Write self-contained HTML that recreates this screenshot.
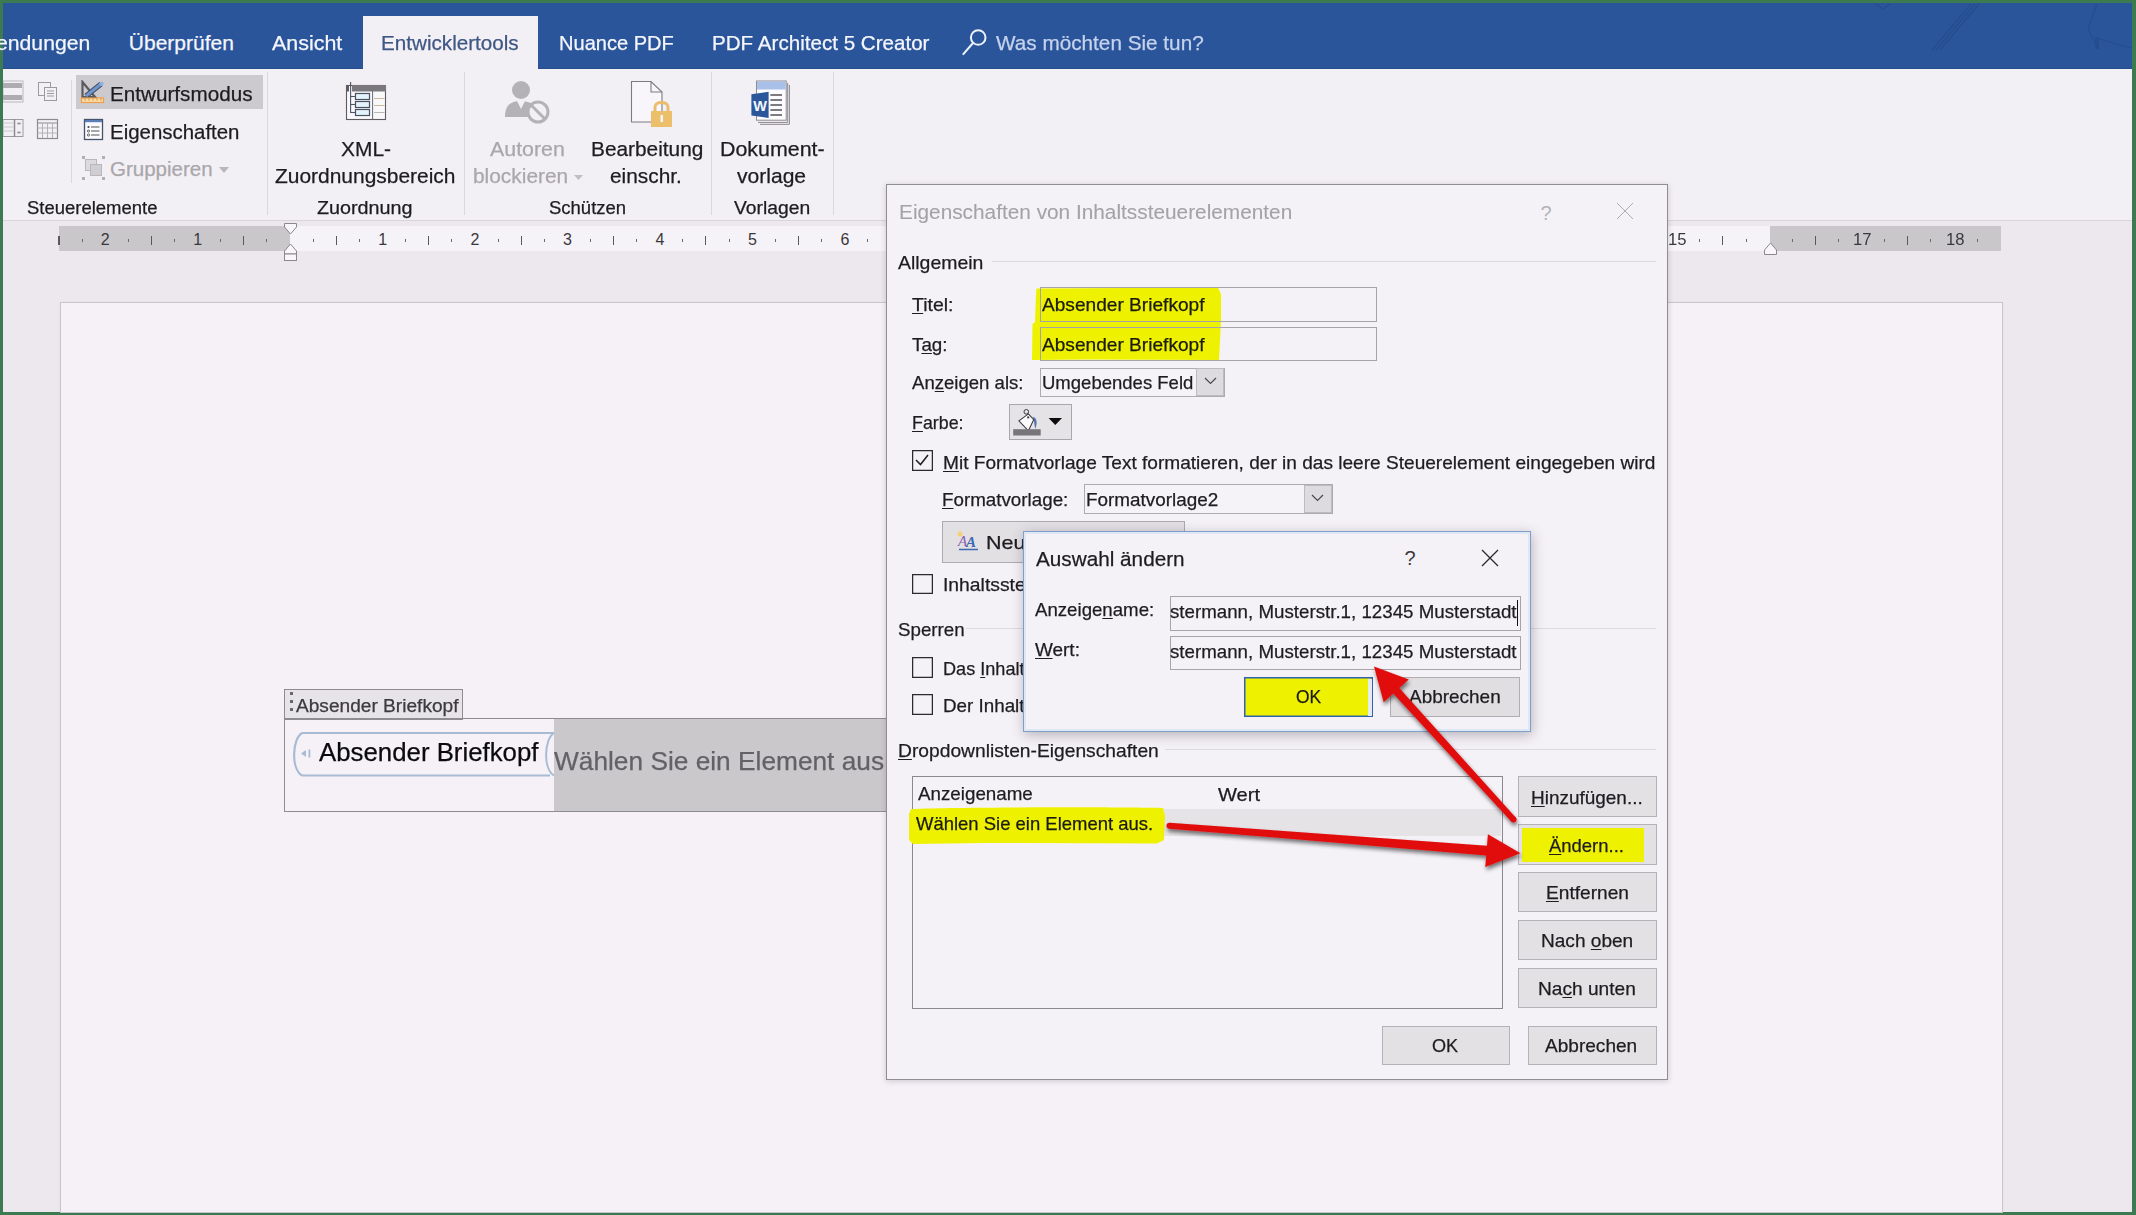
<!DOCTYPE html>
<html><head><meta charset="utf-8"><style>
html,body{margin:0;padding:0;}
body{width:2136px;height:1215px;position:relative;overflow:hidden;background:#3c7a52;font-family:"Liberation Sans",sans-serif;}
.a{position:absolute;}
.t{white-space:pre;-webkit-text-stroke:0.25px currentColor;}
u{text-decoration:underline;text-underline-offset:2px;text-decoration-thickness:1px;}
</style></head><body>
<div class="a" style="left:3.0px;top:3.0px;width:2129.0px;height:1209.0px;background:#ece8ee;"></div>
<div class="a" style="left:3.0px;top:3.0px;width:2129.0px;height:65.5px;background:#2b559b;"></div>
<div class="a" style="left:3.0px;top:67.5px;width:2129.0px;height:1.0px;background:#264d8c;"></div>
<div class="a" style="left:3.0px;top:68.5px;width:2129.0px;height:151.5px;background:#f3f0f5;"></div>
<div class="a" style="left:3.0px;top:220.0px;width:2129.0px;height:1.0px;background:#d8d5da;"></div>
<div class="a" style="left:363.0px;top:16.0px;width:175.0px;height:53.0px;background:#f3f0f5;"></div>
<span id="t0" class="a t" style="left:-4.5px;top:32.32px;font-size:21px;line-height:21px;color:#f4f6fb;font-family:'Liberation Sans',sans-serif;transform:scaleX(1.0092);transform-origin:0 0;">endungen</span>
<span id="t1" class="a t" style="left:128.8px;top:32.32px;font-size:21px;line-height:21px;color:#f4f6fb;font-family:'Liberation Sans',sans-serif;">Überprüfen</span>
<span id="t2" class="a t" style="left:272.4px;top:32.32px;font-size:21px;line-height:21px;color:#f4f6fb;font-family:'Liberation Sans',sans-serif;transform:scaleX(1.0207);transform-origin:0 0;">Ansicht</span>
<span id="t3" class="a t" style="left:381.0px;top:32.32px;font-size:21px;line-height:21px;color:#3e5783;font-family:'Liberation Sans',sans-serif;transform:scaleX(0.9831);transform-origin:0 0;">Entwicklertools</span>
<span id="t4" class="a t" style="left:558.5px;top:32.32px;font-size:21px;line-height:21px;color:#f4f6fb;font-family:'Liberation Sans',sans-serif;transform:scaleX(0.9549);transform-origin:0 0;">Nuance PDF</span>
<span id="t5" class="a t" style="left:711.7px;top:32.32px;font-size:21px;line-height:21px;color:#f4f6fb;font-family:'Liberation Sans',sans-serif;transform:scaleX(0.9808);transform-origin:0 0;">PDF Architect 5 Creator</span>
<svg class="a" style="left:958px;top:26px" width="34" height="32" viewBox="0 0 34 32"><circle cx="20.2" cy="11.5" r="7.3" fill="none" stroke="#eef3fb" stroke-width="2"/><line x1="15" y1="17" x2="5.3" y2="28.1" stroke="#eef3fb" stroke-width="2" stroke-linecap="round"/></svg>
<span id="t6" class="a t" style="left:995.5px;top:32.32px;font-size:21px;line-height:21px;color:#c6d3ec;font-family:'Liberation Sans',sans-serif;transform:scaleX(0.9867);transform-origin:0 0;">Was möchten Sie tun?</span>
<svg class="a" style="left:1850px;top:3px" width="281" height="66" viewBox="0 0 281 66">
<g stroke="#254c8c" stroke-width="1.2" fill="none" opacity="0.9">
<path d="M121 1 L82 47 M125 1 L86 47 M129 1 L90 47"/>
<path d="M26 1 L33 6 L40 1"/>
<path d="M247 1 L238 26 L248 45"/><path d="M246 35 L281 45"/>
</g><rect x="245" y="34" width="4" height="12" fill="#254c8c" opacity="0.8"/></svg>
<div class="a" style="left:71.0px;top:80.0px;width:1.0px;height:103.0px;background:#dcd9de;"></div>
<div class="a" style="left:267.0px;top:72.0px;width:1.0px;height:143.0px;background:#dcd9de;"></div>
<div class="a" style="left:464.0px;top:72.0px;width:1.0px;height:143.0px;background:#dcd9de;"></div>
<div class="a" style="left:711.0px;top:72.0px;width:1.0px;height:143.0px;background:#dcd9de;"></div>
<div class="a" style="left:833.0px;top:72.0px;width:1.0px;height:143.0px;background:#dcd9de;"></div>
<svg class="a" style="left:3px;top:80px" width="22" height="24" viewBox="0 0 22 24">
<rect x="0" y="1" width="20" height="21" fill="none" stroke="#b9b7bb" stroke-width="1"/>
<rect x="0" y="3" width="19" height="5" fill="#aeacb0"/><rect x="0" y="15" width="19" height="5" fill="#aeacb0"/>
</svg>
<svg class="a" style="left:37px;top:80px" width="23" height="23" viewBox="0 0 23 23">
<rect x="1.5" y="2.5" width="12" height="13" fill="none" stroke="#9c9a9e"/><rect x="7.5" y="7.5" width="12" height="13" fill="#f3f0f5" stroke="#9c9a9e"/>
<line x1="10" y1="11" x2="17" y2="11" stroke="#9c9a9e"/><line x1="10" y1="13.5" x2="17" y2="13.5" stroke="#9c9a9e"/><line x1="10" y1="16" x2="17" y2="16" stroke="#9c9a9e"/>
</svg>
<svg class="a" style="left:3px;top:119px" width="22" height="21" viewBox="0 0 22 21">
<rect x="0" y="0.5" width="20" height="17" fill="none" stroke="#9c9a9e"/><line x1="11.5" y1="0" x2="11.5" y2="18" stroke="#8c8a8e" stroke-width="1.5"/>
<ellipse cx="16" cy="4.5" rx="2" ry="1" fill="#9c9a9e"/><ellipse cx="16" cy="13.5" rx="2" ry="1" fill="#9c9a9e"/>
<line x1="0" y1="4" x2="10" y2="4" stroke="#c9c7cb"/><line x1="0" y1="8" x2="10" y2="8" stroke="#c9c7cb"/><line x1="0" y1="12" x2="10" y2="12" stroke="#c9c7cb"/>
</svg>
<svg class="a" style="left:36px;top:118px" width="24" height="23" viewBox="0 0 24 23">
<rect x="1.5" y="1.5" width="20" height="19" fill="none" stroke="#8c8a8e" stroke-width="1.2"/><line x1="1.5" y1="5" x2="21.5" y2="5" stroke="#8c8a8e"/>
<line x1="6.5" y1="5" x2="6.5" y2="20" stroke="#b3b1b5"/><line x1="11.5" y1="5" x2="11.5" y2="20" stroke="#b3b1b5"/><line x1="16.5" y1="5" x2="16.5" y2="20" stroke="#b3b1b5"/>
<line x1="1.5" y1="10" x2="21.5" y2="10" stroke="#b3b1b5"/><line x1="1.5" y1="15" x2="21.5" y2="15" stroke="#b3b1b5"/>
</svg>
<div class="a" style="left:76.0px;top:75.0px;width:187.0px;height:34.0px;background:#cdcacf;"></div>
<svg class="a" style="left:80px;top:80px" width="26" height="24" viewBox="0 0 26 24">
<path d="M2.5 2 L2.5 17 L15 17 Z" fill="none" stroke="#5b5a5e" stroke-width="2.2"/>
<path d="M6 16 L21 4" stroke="#3f4a5c" stroke-width="5.2" stroke-linecap="butt"/>
<path d="M6 16 L21 4" stroke="#6f95cc" stroke-width="3.2"/>
<path d="M20 5 L23 2.5" stroke="#8fb0dc" stroke-width="3.5"/>
<rect x="1.5" y="18" width="22" height="4.5" fill="#f9dba8" stroke="#eba04a" stroke-width="1.2"/>
<path d="M5 18.5 V20.5 M9 18.5 V20.5 M13 18.5 V20.5 M17 18.5 V20.5 M21 18.5 V20.5" stroke="#d98a2e" stroke-width="1"/>
</svg>
<span id="t7" class="a t" style="left:110.0px;top:83.55px;font-size:20.5px;line-height:20.5px;color:#1d1c1f;font-family:'Liberation Sans',sans-serif;transform:scaleX(1.0086);transform-origin:0 0;">Entwurfsmodus</span>
<svg class="a" style="left:83px;top:118px" width="22" height="24" viewBox="0 0 22 24">
<rect x="1.5" y="1.5" width="18" height="20" fill="#fbfafd" stroke="#46526a" stroke-width="1.3"/>
<rect x="2" y="2" width="17" height="2.2" fill="#5b7fb8"/>
<circle cx="5.5" cy="9" r="1.1" fill="#444"/><line x1="8" y1="9" x2="16.5" y2="9" stroke="#555" stroke-width="1"/>
<circle cx="5.5" cy="13" r="1.1" fill="none" stroke="#555" stroke-width="0.9"/><line x1="8" y1="13" x2="16.5" y2="13" stroke="#555" stroke-width="1"/>
<circle cx="5.5" cy="17" r="1.1" fill="none" stroke="#555" stroke-width="0.9"/><line x1="8" y1="17" x2="16.5" y2="17" stroke="#555" stroke-width="1"/>
</svg>
<span id="t8" class="a t" style="left:110.0px;top:121.65px;font-size:20.5px;line-height:20.5px;color:#1d1c1f;font-family:'Liberation Sans',sans-serif;transform:scaleX(0.9966);transform-origin:0 0;">Eigenschaften</span>
<svg class="a" style="left:81px;top:155px" width="26" height="26" viewBox="0 0 26 26">
<rect x="1" y="1" width="3" height="3" fill="#b1afb3"/><rect x="21" y="1" width="3" height="3" fill="#b1afb3"/>
<rect x="1" y="22" width="3" height="3" fill="#b1afb3"/><rect x="21" y="22" width="3" height="3" fill="#b1afb3"/>
<rect x="4.5" y="4.5" width="11" height="11" fill="#dcdadd" stroke="#b9b7bb"/><rect x="9.5" y="9.5" width="11" height="11" fill="#d0ced2" stroke="#b9b7bb"/>
</svg>
<span id="t9" class="a t" style="left:110.0px;top:159.25px;font-size:20.5px;line-height:20.5px;color:#a9a7ab;font-family:'Liberation Sans',sans-serif;">Gruppieren</span>
<svg class="a" style="left:219px;top:167px" width="11" height="7"><path d="M0 0 L10 0 L5 6 Z" fill="#b9b7bb"/></svg>
<span id="t10" class="a t" style="left:27.0px;top:198.76px;font-size:18px;line-height:18px;color:#1d1c1f;font-family:'Liberation Sans',sans-serif;transform:scaleX(1.0268);transform-origin:0 0;">Steuerelemente</span>
<svg class="a" style="left:345px;top:81px" width="42" height="40" viewBox="0 0 42 40">
<rect x="1.5" y="4.5" width="39" height="34" fill="#f9f8fb" stroke="#5d5b60" stroke-width="1.1"/>
<rect x="7" y="4" width="34" height="6.5" fill="#7a787d"/>
<rect x="1" y="4" width="3" height="6.5" fill="#5d5b60"/>
<line x1="5.6" y1="1" x2="5.6" y2="32" stroke="#4f5566" stroke-width="1.1"/>
<rect x="10.5" y="12.5" width="14" height="6" fill="#e4f2fb" stroke="#4a5262" stroke-width="1.2"/>
<rect x="10.5" y="20.5" width="14" height="6" fill="#e4f2fb" stroke="#4a5262" stroke-width="1.2"/>
<rect x="10.5" y="28.5" width="14" height="6" fill="#e4f2fb" stroke="#4a5262" stroke-width="1.2"/>
<line x1="5.6" y1="15.5" x2="10.5" y2="15.5" stroke="#4f5566" stroke-width="1.1"/><line x1="5.6" y1="23.5" x2="10.5" y2="23.5" stroke="#4f5566" stroke-width="1.1"/><line x1="5.6" y1="31.5" x2="10.5" y2="31.5" stroke="#4f5566" stroke-width="1.1"/>
<line x1="27.6" y1="10" x2="27.6" y2="38.5" stroke="#6a686d" stroke-width="1"/>
<line x1="29" y1="17.5" x2="39.5" y2="17.5" stroke="#c9b89a" stroke-width="1"/><line x1="29" y1="24.5" x2="39.5" y2="24.5" stroke="#c9b89a" stroke-width="1"/><line x1="29" y1="31.5" x2="39.5" y2="31.5" stroke="#b9b7bb" stroke-width="1"/>
</svg>
<span id="t11" class="a t" style="left:340.5px;top:138.75px;font-size:20.5px;line-height:20.5px;color:#1d1c1f;font-family:'Liberation Sans',sans-serif;transform:scaleX(1.0207);transform-origin:0 0;">XML-</span>
<span id="t12" class="a t" style="left:275.0px;top:166.45px;font-size:20.5px;line-height:20.5px;color:#1d1c1f;font-family:'Liberation Sans',sans-serif;transform:scaleX(1.0218);transform-origin:0 0;">Zuordnungsbereich</span>
<span id="t13" class="a t" style="left:317.3px;top:199.36px;font-size:18px;line-height:18px;color:#1d1c1f;font-family:'Liberation Sans',sans-serif;transform:scaleX(1.0967);transform-origin:0 0;">Zuordnung</span>
<svg class="a" style="left:504px;top:79px" width="48" height="48" viewBox="0 0 48 48">
<circle cx="17" cy="11" r="9" fill="#b4b2b6"/>
<path d="M1 38 C1 25 8 22 17 22 C26 22 31 26 32 32 L30 38 Z" fill="#b4b2b6"/>
<path d="M13 22 L17 30 L21 22" fill="#f3f0f5"/>
<circle cx="34" cy="33" r="10" fill="#f3f0f5" stroke="#b4b2b6" stroke-width="3"/>
<line x1="27" y1="26" x2="41" y2="40" stroke="#b4b2b6" stroke-width="3"/>
</svg>
<span id="t14" class="a t" style="left:489.6px;top:139.05px;font-size:20.5px;line-height:20.5px;color:#a9a7ab;font-family:'Liberation Sans',sans-serif;transform:scaleX(1.0430);transform-origin:0 0;">Autoren</span>
<span id="t15" class="a t" style="left:472.9px;top:166.25px;font-size:20.5px;line-height:20.5px;color:#a9a7ab;font-family:'Liberation Sans',sans-serif;transform:scaleX(1.0187);transform-origin:0 0;">blockieren</span>
<svg class="a" style="left:574px;top:175px" width="10" height="6"><path d="M0 0 L9 0 L4.5 5 Z" fill="#c0bec2"/></svg>
<svg class="a" style="left:630px;top:80px" width="44" height="48" viewBox="0 0 44 48">
<path d="M1.5 1.5 L21 1.5 L32 12 L32 42 L1.5 42 Z" fill="#f8f6fa" stroke="#7d7b80" stroke-width="1.1"/>
<path d="M21 1.5 L21 12 L32 12" fill="none" stroke="#7d7b80" stroke-width="1.1"/>
<path d="M25 32 L25 27 C25 21 38 21 38 27 L38 32" fill="none" stroke="#e9bd6c" stroke-width="3"/>
<rect x="21" y="31" width="21" height="16" fill="#ecbf6b"/>
<rect x="30.5" y="35" width="2.5" height="7" fill="#f8f6fa"/>
</svg>
<span id="t16" class="a t" style="left:591.0px;top:138.75px;font-size:20.5px;line-height:20.5px;color:#1d1c1f;font-family:'Liberation Sans',sans-serif;transform:scaleX(1.0157);transform-origin:0 0;">Bearbeitung</span>
<span id="t17" class="a t" style="left:610.2px;top:166.25px;font-size:20.5px;line-height:20.5px;color:#1d1c1f;font-family:'Liberation Sans',sans-serif;transform:scaleX(1.0162);transform-origin:0 0;">einschr.</span>
<svg class="a" style="left:748px;top:78px" width="46" height="50" viewBox="0 0 46 50">
<path d="M12 46.3 L41.4 46.3 L41.4 7" fill="none" stroke="#8a888c" stroke-width="1"/>
<path d="M10 44.4 L39.7 44.4 L39.7 5" fill="none" stroke="#8a888c" stroke-width="1"/>
<rect x="8.5" y="3" width="29.7" height="39.2" fill="#fcfbfe" stroke="#8e8c90" stroke-width="1"/>
<rect x="9" y="3.5" width="28.7" height="8" fill="#a9c1e9"/>
<path d="M22.4 17 H34 M22.4 22 H34 M22.4 27 H34 M22.4 32 H34 M22.4 37 H34" stroke="#7d7b80" stroke-width="1.8"/>
<path d="M3.4 16.2 L20.6 13.8 L20.6 39.9 L3.4 37.5 Z" fill="#2b579a"/>
<text x="5.2" y="33.2" font-family="Liberation Sans" font-weight="bold" font-size="14.5" fill="#f4f7fd">W</text>
</svg>
<span id="t18" class="a t" style="left:719.6px;top:138.75px;font-size:20.5px;line-height:20.5px;color:#1d1c1f;font-family:'Liberation Sans',sans-serif;transform:scaleX(1.0442);transform-origin:0 0;">Dokument-</span>
<span id="t19" class="a t" style="left:737.4px;top:166.25px;font-size:20.5px;line-height:20.5px;color:#1d1c1f;font-family:'Liberation Sans',sans-serif;transform:scaleX(1.0275);transform-origin:0 0;">vorlage</span>
<span id="t20" class="a t" style="left:548.8px;top:198.56px;font-size:18px;line-height:18px;color:#1d1c1f;font-family:'Liberation Sans',sans-serif;transform:scaleX(1.0271);transform-origin:0 0;">Schützen</span>
<span id="t21" class="a t" style="left:733.9px;top:198.56px;font-size:18px;line-height:18px;color:#1d1c1f;font-family:'Liberation Sans',sans-serif;transform:scaleX(1.0723);transform-origin:0 0;">Vorlagen</span>
<div class="a" style="left:59.0px;top:226.0px;width:231.0px;height:25.0px;background:#cac7cb;"></div>
<div class="a" style="left:290.0px;top:226.0px;width:1480.0px;height:25.0px;background:#f6f3f8;"></div>
<div class="a" style="left:1770.0px;top:226.0px;width:231.0px;height:25.0px;background:#cac7cb;"></div>
<div class="a" style="left:266.4px;top:239.0px;width:1.0px;height:3.0px;background:#6a686c;"></div>
<div class="a" style="left:243.3px;top:236.0px;width:1.0px;height:9.0px;background:#5a585c;"></div>
<div class="a" style="left:220.3px;top:239.0px;width:1.0px;height:3.0px;background:#6a686c;"></div>
<span id="t22" class="a t" style="left:193.3px;top:232.36px;font-size:16px;line-height:16px;color:#3a383c;font-family:'Liberation Sans',sans-serif;-webkit-text-stroke:0;">1</span>
<div class="a" style="left:174.0px;top:239.0px;width:1.0px;height:3.0px;background:#6a686c;"></div>
<div class="a" style="left:150.9px;top:236.0px;width:1.0px;height:9.0px;background:#5a585c;"></div>
<div class="a" style="left:127.9px;top:239.0px;width:1.0px;height:3.0px;background:#6a686c;"></div>
<span id="t23" class="a t" style="left:100.8px;top:232.36px;font-size:16px;line-height:16px;color:#3a383c;font-family:'Liberation Sans',sans-serif;-webkit-text-stroke:0;">2</span>
<div class="a" style="left:81.5px;top:239.0px;width:1.0px;height:3.0px;background:#6a686c;"></div>
<div class="a" style="left:58.4px;top:236.0px;width:1.0px;height:9.0px;background:#5a585c;"></div>
<div class="a" style="left:59.0px;top:236.0px;width:1.0px;height:9.0px;background:#5a585c;"></div>
<div class="a" style="left:312.6px;top:239.0px;width:1.0px;height:3.0px;background:#6a686c;"></div>
<div class="a" style="left:335.6px;top:236.0px;width:1.0px;height:9.0px;background:#5a585c;"></div>
<div class="a" style="left:358.7px;top:239.0px;width:1.0px;height:3.0px;background:#6a686c;"></div>
<span id="t24" class="a t" style="left:378.2px;top:232.36px;font-size:16px;line-height:16px;color:#3a383c;font-family:'Liberation Sans',sans-serif;-webkit-text-stroke:0;">1</span>
<div class="a" style="left:405.0px;top:239.0px;width:1.0px;height:3.0px;background:#6a686c;"></div>
<div class="a" style="left:428.1px;top:236.0px;width:1.0px;height:9.0px;background:#5a585c;"></div>
<div class="a" style="left:451.1px;top:239.0px;width:1.0px;height:3.0px;background:#6a686c;"></div>
<span id="t25" class="a t" style="left:470.6px;top:232.36px;font-size:16px;line-height:16px;color:#3a383c;font-family:'Liberation Sans',sans-serif;-webkit-text-stroke:0;">2</span>
<div class="a" style="left:497.5px;top:239.0px;width:1.0px;height:3.0px;background:#6a686c;"></div>
<div class="a" style="left:520.5px;top:236.0px;width:1.0px;height:9.0px;background:#5a585c;"></div>
<div class="a" style="left:543.6px;top:239.0px;width:1.0px;height:3.0px;background:#6a686c;"></div>
<span id="t26" class="a t" style="left:563.1px;top:232.36px;font-size:16px;line-height:16px;color:#3a383c;font-family:'Liberation Sans',sans-serif;-webkit-text-stroke:0;">3</span>
<div class="a" style="left:589.9px;top:239.0px;width:1.0px;height:3.0px;background:#6a686c;"></div>
<div class="a" style="left:613.0px;top:236.0px;width:1.0px;height:9.0px;background:#5a585c;"></div>
<div class="a" style="left:636.1px;top:239.0px;width:1.0px;height:3.0px;background:#6a686c;"></div>
<span id="t27" class="a t" style="left:655.5px;top:232.36px;font-size:16px;line-height:16px;color:#3a383c;font-family:'Liberation Sans',sans-serif;-webkit-text-stroke:0;">4</span>
<div class="a" style="left:682.4px;top:239.0px;width:1.0px;height:3.0px;background:#6a686c;"></div>
<div class="a" style="left:705.4px;top:236.0px;width:1.0px;height:9.0px;background:#5a585c;"></div>
<div class="a" style="left:728.5px;top:239.0px;width:1.0px;height:3.0px;background:#6a686c;"></div>
<span id="t28" class="a t" style="left:748.0px;top:232.36px;font-size:16px;line-height:16px;color:#3a383c;font-family:'Liberation Sans',sans-serif;-webkit-text-stroke:0;">5</span>
<div class="a" style="left:774.8px;top:239.0px;width:1.0px;height:3.0px;background:#6a686c;"></div>
<div class="a" style="left:797.9px;top:236.0px;width:1.0px;height:9.0px;background:#5a585c;"></div>
<div class="a" style="left:821.0px;top:239.0px;width:1.0px;height:3.0px;background:#6a686c;"></div>
<span id="t29" class="a t" style="left:840.5px;top:232.36px;font-size:16px;line-height:16px;color:#3a383c;font-family:'Liberation Sans',sans-serif;-webkit-text-stroke:0;">6</span>
<div class="a" style="left:867.3px;top:239.0px;width:1.0px;height:3.0px;background:#6a686c;"></div>
<span id="t30" class="a t" style="left:1668.2px;top:232.36px;font-size:16px;line-height:16px;color:#3a383c;font-family:'Liberation Sans',sans-serif;transform:scaleX(1.0395);transform-origin:0 0;-webkit-text-stroke:0;">15</span>
<div class="a" style="left:1699.3px;top:239.0px;width:1.0px;height:3.0px;background:#6a686c;"></div>
<div class="a" style="left:1722.4px;top:236.0px;width:1.0px;height:9.0px;background:#5a585c;"></div>
<div class="a" style="left:1745.5px;top:239.0px;width:1.0px;height:3.0px;background:#6a686c;"></div>
<div class="a" style="left:1791.8px;top:239.0px;width:1.0px;height:3.0px;background:#6a686c;"></div>
<div class="a" style="left:1814.9px;top:236.0px;width:1.0px;height:9.0px;background:#5a585c;"></div>
<div class="a" style="left:1837.9px;top:239.0px;width:1.0px;height:3.0px;background:#6a686c;"></div>
<span id="t31" class="a t" style="left:1853.2px;top:232.36px;font-size:16px;line-height:16px;color:#3a383c;font-family:'Liberation Sans',sans-serif;transform:scaleX(1.0395);transform-origin:0 0;-webkit-text-stroke:0;">17</span>
<div class="a" style="left:1884.2px;top:239.0px;width:1.0px;height:3.0px;background:#6a686c;"></div>
<div class="a" style="left:1907.3px;top:236.0px;width:1.0px;height:9.0px;background:#5a585c;"></div>
<div class="a" style="left:1930.4px;top:239.0px;width:1.0px;height:3.0px;background:#6a686c;"></div>
<span id="t32" class="a t" style="left:1945.6px;top:232.36px;font-size:16px;line-height:16px;color:#3a383c;font-family:'Liberation Sans',sans-serif;transform:scaleX(1.0395);transform-origin:0 0;-webkit-text-stroke:0;">18</span>
<div class="a" style="left:1976.7px;top:239.0px;width:1.0px;height:3.0px;background:#6a686c;"></div>
<svg class="a" style="left:283px;top:222px" width="15" height="40" viewBox="0 0 15 40">
<path d="M1.5 1.5 L13.5 1.5 L13.5 5 L7.5 12 L1.5 5 Z" fill="#f8f6fa" stroke="#8a888c"/>
<path d="M7.5 22 L13.5 29 L13.5 32 L1.5 32 L1.5 29 Z" fill="#f8f6fa" stroke="#8a888c"/>
<rect x="1.5" y="32" width="12" height="6.5" fill="#f8f6fa" stroke="#8a888c"/>
</svg>
<svg class="a" style="left:1763px;top:242px" width="15" height="14" viewBox="0 0 15 14">
<path d="M7.5 1 L13.5 8 L13.5 12.5 L1.5 12.5 L1.5 8 Z" fill="#f8f6fa" stroke="#8a888c"/>
</svg>
<div class="a" style="left:60.5px;top:303.0px;width:1941.0px;height:909.0px;background:#f5f1f7;box-shadow:0 0 0 1px #c9c6cb, 0 0 4px rgba(0,0,0,0.06);"></div>
<div class="a" style="left:284.0px;top:689.0px;width:179.0px;height:31.0px;background:#e7e4e9;box-shadow:inset 0 0 0 1px #8e8c90;"></div>
<div class="a" style="left:289.5px;top:692.0px;width:3.0px;height:3.0px;background:#69676b;"></div>
<div class="a" style="left:289.5px;top:700.0px;width:3.0px;height:3.0px;background:#69676b;"></div>
<div class="a" style="left:289.5px;top:708.0px;width:3.0px;height:3.0px;background:#69676b;"></div>
<span id="t33" class="a t" style="left:295.5px;top:697.16px;font-size:18px;line-height:18px;color:#3c3a3e;font-family:'Liberation Sans',sans-serif;transform:scaleX(1.0614);transform-origin:0 0;">Absender Briefkopf</span>
<div class="a" style="left:284.0px;top:718.0px;width:606.0px;height:1.0px;background:#8e8c90;"></div>
<div class="a" style="left:284.0px;top:810.5px;width:606.0px;height:1.0px;background:#8e8c90;"></div>
<div class="a" style="left:284.0px;top:718.0px;width:1.0px;height:93.5px;background:#8e8c90;"></div>
<div class="a" style="left:554.3px;top:719.0px;width:335.7px;height:91.5px;background:#cbc8cc;"></div>
<svg class="a" style="left:288px;top:729px" width="272" height="50" viewBox="0 0 272 50">
<path d="M14 4 L266 4" stroke="#a8bbd4" stroke-width="2.2" fill="none"/>
<path d="M14 46.5 L262 46.5" stroke="#a8bbd4" stroke-width="2.2" fill="none"/>
<path d="M14 4 C4 10 3 40 14 46.5" stroke="#a8bbd4" stroke-width="2.2" fill="none"/>
<path d="M266 4 C256 10 255 40 266 46.5" stroke="#a8bbd4" stroke-width="2" fill="none"/>
<path d="M13 24.5 L18 21 L18 28 Z" fill="#a8bbd4"/><rect x="20.5" y="20.5" width="1.8" height="8" fill="#a8bbd4"/>
</svg>
<span id="t34" class="a t" style="left:319.4px;top:739.49px;font-size:26px;line-height:26px;color:#0b0b0c;font-family:'Liberation Sans',sans-serif;transform:scaleX(0.9926);transform-origin:0 0;">Absender Briefkopf</span>
<span id="t35" class="a t" style="left:554.2px;top:747.99px;font-size:26px;line-height:26px;color:#636166;font-family:'Liberation Sans',sans-serif;transform:scaleX(1.0106);transform-origin:0 0;">Wählen Sie ein Element aus</span>
<div class="a" style="left:886.0px;top:184.0px;width:782.0px;height:896.0px;background:#f5f2f7;box-shadow:inset 0 0 0 1px #8f8d92, 0 1px 6px rgba(40,30,50,0.2);"></div>
<span id="t36" class="a t" style="left:898.9px;top:201.55px;font-size:20.5px;line-height:20.5px;color:#a4a2a6;font-family:'Liberation Sans',sans-serif;transform:scaleX(1.0148);transform-origin:0 0;-webkit-text-stroke:0.1px currentColor;">Eigenschaften von Inhaltssteuerelementen</span>
<span id="t37" class="a t" style="left:1540.5px;top:202.67px;font-size:20px;line-height:20px;color:#b4b2b6;font-family:'Liberation Sans',sans-serif;-webkit-text-stroke:0;">?</span>
<svg class="a" style="left:1616px;top:202px" width="18" height="18"><path d="M1 1 L17 17 M17 1 L1 17" stroke="#aeacb0" stroke-width="1"/></svg>
<span id="t38" class="a t" style="left:897.6px;top:253.22px;font-size:19px;line-height:19px;color:#1d1c1f;font-family:'Liberation Sans',sans-serif;transform:scaleX(1.0235);transform-origin:0 0;">Allgemein</span>
<div class="a" style="left:992.0px;top:261.0px;width:663.6px;height:1.0px;background:#dddadf;"></div>
<span id="t39" class="a t" style="left:912.3px;top:294.52px;font-size:19px;line-height:19px;color:#1d1c1f;font-family:'Liberation Sans',sans-serif;transform:scaleX(1.0251);transform-origin:0 0;"><u>T</u>itel:</span>
<span id="t40" class="a t" style="left:912.3px;top:334.72px;font-size:19px;line-height:19px;color:#1d1c1f;font-family:'Liberation Sans',sans-serif;transform:scaleX(0.9878);transform-origin:0 0;">T<u>a</u>g:</span>
<svg class="a" style="left:1028px;top:284px" width="200" height="80" viewBox="0 0 200 80"><path d="M8.5 4.5 L190 3.5 L193 10 L193 37 L191 76 L60 75.5 L4 76 L4.5 40 L7 38 L8 10 Z" fill="#eef200"/></svg>
<div class="a" style="left:1040.0px;top:287.0px;width:337.0px;height:35.0px;box-shadow:inset 0 0 0 1px #a6a4a8;"></div>
<div class="a" style="left:1040.0px;top:327.0px;width:337.0px;height:34.0px;box-shadow:inset 0 0 0 1px #a6a4a8;"></div>
<span id="t41" class="a t" style="left:1042.4px;top:294.82px;font-size:19px;line-height:19px;color:#1a1a10;font-family:'Liberation Sans',sans-serif;transform:scaleX(1.0056);transform-origin:0 0;">Absender Briefkopf</span>
<span id="t42" class="a t" style="left:1042.4px;top:334.72px;font-size:19px;line-height:19px;color:#1a1a10;font-family:'Liberation Sans',sans-serif;transform:scaleX(1.0056);transform-origin:0 0;">Absender Briefkopf</span>
<span id="t43" class="a t" style="left:912.4px;top:372.82px;font-size:19px;line-height:19px;color:#1d1c1f;font-family:'Liberation Sans',sans-serif;transform:scaleX(0.9773);transform-origin:0 0;">An<u>z</u>eigen als:</span>
<div class="a" style="left:1040.0px;top:368.0px;width:185.0px;height:29.0px;background:#f6f3f8;box-shadow:inset 0 0 0 1px #adabaf;"></div>
<div class="a" style="left:1196.0px;top:368.0px;width:28.0px;height:28.0px;background:#dedbe0;box-shadow:inset 0 0 0 1px #bdbbc0;"></div>
<svg class="a" style="left:1204px;top:377px" width="13" height="8"><path d="M1 1 L6.5 6.5 L12 1" fill="none" stroke="#4a484c" stroke-width="1.2"/></svg>
<span id="t44" class="a t" style="left:1042.4px;top:373.32px;font-size:19px;line-height:19px;color:#1d1c1f;font-family:'Liberation Sans',sans-serif;transform:scaleX(0.9745);transform-origin:0 0;">Umgebendes Feld</span>
<span id="t45" class="a t" style="left:912.4px;top:413.02px;font-size:19px;line-height:19px;color:#1d1c1f;font-family:'Liberation Sans',sans-serif;transform:scaleX(0.9377);transform-origin:0 0;"><u>F</u>arbe:</span>
<div class="a" style="left:1009.0px;top:404.0px;width:63.0px;height:36.0px;background:#e6e3e7;box-shadow:inset 0 0 0 1px #a9a7ab;"></div>
<svg class="a" style="left:1010px;top:405px" width="34" height="32" viewBox="0 0 34 32">
<path d="M23 11.5 C27.5 13.5 27.5 19 25.2 24 L24 17 Z" fill="#5877b0"/>
<path d="M8.9 15.9 L18.4 8.9 L23.7 14.7 L18.4 25.8 Z" fill="#fbfafd" stroke="#3b393d" stroke-width="1.1"/>
<circle cx="16.3" cy="6.8" r="2.3" fill="none" stroke="#3b393d" stroke-width="1"/>
<circle cx="18.2" cy="12.4" r="1.1" fill="#3b393d"/>
<rect x="3.2" y="24.2" width="27.5" height="6.3" fill="#77757a"/>
</svg>
<svg class="a" style="left:1048px;top:417px" width="15" height="9"><path d="M0.6 1 L14 1 L7.3 8 Z" fill="#0c0c0c"/></svg>
<div class="a" style="left:912.0px;top:450.0px;width:21.0px;height:21.0px;box-shadow:inset 0 0 0 1px #2b2a2d;box-shadow:inset 0 0 0 1.25px #2b2a2d;"></div>
<svg class="a" style="left:912px;top:450px" width="20" height="20"><path d="M4 10 L8.5 14.5 L16 5" fill="none" stroke="#222" stroke-width="1.6"/></svg>
<span id="t46" class="a t" style="left:942.7px;top:453.12px;font-size:19px;line-height:19px;color:#1d1c1f;font-family:'Liberation Sans',sans-serif;transform:scaleX(1.0044);transform-origin:0 0;"><u>M</u>it Formatvorlage Text formatieren, der in das leere Steuerelement eingegeben wird</span>
<span id="t47" class="a t" style="left:941.7px;top:490.02px;font-size:19px;line-height:19px;color:#1d1c1f;font-family:'Liberation Sans',sans-serif;transform:scaleX(0.9884);transform-origin:0 0;"><u>F</u>ormatvorlage:</span>
<div class="a" style="left:1084.0px;top:484.0px;width:249.0px;height:30.0px;background:#f6f3f8;box-shadow:inset 0 0 0 1px #adabaf;"></div>
<div class="a" style="left:1304.0px;top:485.0px;width:28.0px;height:28.0px;background:#dedbe0;box-shadow:inset 0 0 0 1px #bdbbc0;"></div>
<svg class="a" style="left:1311px;top:494px" width="13" height="8"><path d="M1 1 L6.5 6.5 L12 1" fill="none" stroke="#4a484c" stroke-width="1.2"/></svg>
<span id="t48" class="a t" style="left:1086.4px;top:490.42px;font-size:19px;line-height:19px;color:#1d1c1f;font-family:'Liberation Sans',sans-serif;transform:scaleX(0.9943);transform-origin:0 0;">Formatvorlage2</span>
<div class="a" style="left:942.0px;top:521.0px;width:243.0px;height:42.0px;background:#e3e0e4;box-shadow:inset 0 0 0 1px #adabaf;"></div>
<svg class="a" style="left:956px;top:530px" width="24" height="22" viewBox="0 0 24 22">
<circle cx="4" cy="4" r="2.5" fill="#f1d27a"/>
<text x="2" y="16" font-family="Liberation Serif" font-style="italic" font-size="15" fill="#8a5fb0">A</text>
<text x="10" y="17" font-family="Liberation Serif" font-style="italic" font-weight="bold" font-size="15" fill="#3f68b0">A</text>
<line x1="3" y1="19.5" x2="22" y2="19.5" stroke="#3f68b0" stroke-width="1.5"/>
</svg>
<span id="t49" class="a t" style="left:985.5px;top:533.22px;font-size:19px;line-height:19px;color:#1d1c1f;font-family:'Liberation Sans',sans-serif;transform:scaleX(1.1331);transform-origin:0 0;">Neu</span>
<div class="a" style="left:912.0px;top:574.0px;width:21.0px;height:20.0px;box-shadow:inset 0 0 0 1px #2b2a2d;box-shadow:inset 0 0 0 1.25px #2b2a2d;"></div>
<span id="t50" class="a t" style="left:942.7px;top:574.82px;font-size:19px;line-height:19px;color:#1d1c1f;font-family:'Liberation Sans',sans-serif;transform:scaleX(1.0173);transform-origin:0 0;">Inhaltssteu</span>
<span id="t51" class="a t" style="left:897.5px;top:620.12px;font-size:19px;line-height:19px;color:#1d1c1f;font-family:'Liberation Sans',sans-serif;transform:scaleX(0.9865);transform-origin:0 0;">Sperren</span>
<div class="a" style="left:966.0px;top:628.0px;width:689.6px;height:1.0px;background:#dddadf;"></div>
<div class="a" style="left:912.0px;top:657.0px;width:21.0px;height:21.0px;box-shadow:inset 0 0 0 1px #2b2a2d;box-shadow:inset 0 0 0 1.25px #2b2a2d;"></div>
<span id="t52" class="a t" style="left:943.0px;top:659.32px;font-size:19px;line-height:19px;color:#1d1c1f;font-family:'Liberation Sans',sans-serif;transform:scaleX(0.9525);transform-origin:0 0;">Das <u>I</u>nhalt</span>
<div class="a" style="left:912.0px;top:694.0px;width:21.0px;height:21.0px;box-shadow:inset 0 0 0 1px #2b2a2d;box-shadow:inset 0 0 0 1.25px #2b2a2d;"></div>
<span id="t53" class="a t" style="left:943.0px;top:696.42px;font-size:19px;line-height:19px;color:#1d1c1f;font-family:'Liberation Sans',sans-serif;transform:scaleX(0.9894);transform-origin:0 0;">Der Inhalt</span>
<span id="t54" class="a t" style="left:897.5px;top:740.82px;font-size:19px;line-height:19px;color:#1d1c1f;font-family:'Liberation Sans',sans-serif;transform:scaleX(1.0119);transform-origin:0 0;"><u>D</u>ropdownlisten-Eigenschaften</span>
<div class="a" style="left:1165.0px;top:749.0px;width:490.6px;height:1.0px;background:#dddadf;"></div>
<div class="a" style="left:912.0px;top:776.0px;width:591.0px;height:233.0px;background:#f5f2f7;box-shadow:inset 0 0 0 1px #8b898d;"></div>
<div class="a" style="left:913.4px;top:809.0px;width:587.2px;height:26.5px;background:#e6e3e7;"></div>
<svg class="a" style="left:905px;top:804px" width="265" height="44" viewBox="0 0 265 44"><path d="M6 5 C60 3 200 3 258 4 L260 12 L259 36 L252 39.5 L80 39 L8 40 L4 36 L4 10 Z" fill="#eef200"/></svg>
<span id="t55" class="a t" style="left:917.8px;top:783.72px;font-size:19px;line-height:19px;color:#1d1c1f;font-family:'Liberation Sans',sans-serif;transform:scaleX(0.9879);transform-origin:0 0;">Anzeigename</span>
<span id="t56" class="a t" style="left:1218.4px;top:784.62px;font-size:19px;line-height:19px;color:#1d1c1f;font-family:'Liberation Sans',sans-serif;transform:scaleX(1.0587);transform-origin:0 0;">Wert</span>
<span id="t57" class="a t" style="left:915.7px;top:814.02px;font-size:19px;line-height:19px;color:#1a1a10;font-family:'Liberation Sans',sans-serif;transform:scaleX(0.9718);transform-origin:0 0;">Wählen Sie ein Element aus.</span>
<div class="a" style="left:1518.0px;top:776.0px;width:139.0px;height:41.0px;background:#e4e1e5;box-shadow:inset 0 0 0 1px #b4b2b6;"></div>
<span id="t58" class="a t" style="left:1530.8px;top:787.62px;font-size:19px;line-height:19px;color:#1d1c1f;font-family:'Liberation Sans',sans-serif;transform:scaleX(0.9975);transform-origin:0 0;"><u>H</u>inzufügen...</span>
<div class="a" style="left:1518.0px;top:824.0px;width:139.0px;height:41.0px;background:#e4e1e5;box-shadow:inset 0 0 0 1px #b4b2b6;"></div>
<div class="a" style="left:1521.5px;top:827.7px;width:122.7px;height:34.3px;background:#eef200;"></div>
<span id="t59" class="a t" style="left:1549.2px;top:835.62px;font-size:19px;line-height:19px;color:#1d1c1f;font-family:'Liberation Sans',sans-serif;transform:scaleX(0.9712);transform-origin:0 0;"><u>Ä</u>ndern...</span>
<div class="a" style="left:1518.0px;top:872.0px;width:139.0px;height:40.0px;background:#e4e1e5;box-shadow:inset 0 0 0 1px #b4b2b6;"></div>
<span id="t60" class="a t" style="left:1545.7px;top:883.32px;font-size:19px;line-height:19px;color:#1d1c1f;font-family:'Liberation Sans',sans-serif;transform:scaleX(1.0070);transform-origin:0 0;"><u>E</u>ntfernen</span>
<div class="a" style="left:1518.0px;top:920.0px;width:139.0px;height:40.0px;background:#e4e1e5;box-shadow:inset 0 0 0 1px #b4b2b6;"></div>
<span id="t61" class="a t" style="left:1540.7px;top:931.02px;font-size:19px;line-height:19px;color:#1d1c1f;font-family:'Liberation Sans',sans-serif;transform:scaleX(1.0030);transform-origin:0 0;">Nach <u>o</u>ben</span>
<div class="a" style="left:1518.0px;top:968.0px;width:139.0px;height:40.0px;background:#e4e1e5;box-shadow:inset 0 0 0 1px #b4b2b6;"></div>
<span id="t62" class="a t" style="left:1538.3px;top:979.22px;font-size:19px;line-height:19px;color:#1d1c1f;font-family:'Liberation Sans',sans-serif;transform:scaleX(1.0061);transform-origin:0 0;">Na<u>c</u>h unten</span>
<div class="a" style="left:1382.0px;top:1026.0px;width:128.0px;height:39.0px;background:#e4e1e5;box-shadow:inset 0 0 0 1px #b4b2b6;"></div>
<span id="t63" class="a t" style="left:1432.4px;top:1036.22px;font-size:19px;line-height:19px;color:#1d1c1f;font-family:'Liberation Sans',sans-serif;transform:scaleX(0.9507);transform-origin:0 0;">OK</span>
<div class="a" style="left:1528.0px;top:1026.0px;width:129.0px;height:39.0px;background:#e4e1e5;box-shadow:inset 0 0 0 1px #b4b2b6;"></div>
<span id="t64" class="a t" style="left:1544.7px;top:1036.22px;font-size:19px;line-height:19px;color:#1d1c1f;font-family:'Liberation Sans',sans-serif;transform:scaleX(1.0032);transform-origin:0 0;">Abbrechen</span>
<div class="a" style="left:1023.0px;top:531.0px;width:508.0px;height:201.0px;background:#f5f2f7;box-shadow:inset 0 0 0 1px #7f9fc9, inset 0 0 0 3px #dde8f4, 1px 3px 12px rgba(40,30,50,0.3);"></div>
<span id="t65" class="a t" style="left:1035.8px;top:549.45px;font-size:20.5px;line-height:20.5px;color:#1d1c1f;font-family:'Liberation Sans',sans-serif;transform:scaleX(1.0108);transform-origin:0 0;">Auswahl ändern</span>
<span id="t66" class="a t" style="left:1404.5px;top:547.67px;font-size:20px;line-height:20px;color:#3a393c;font-family:'Liberation Sans',sans-serif;-webkit-text-stroke:0;">?</span>
<svg class="a" style="left:1481px;top:549px" width="18" height="18"><path d="M1 1 L17 17 M17 1 L1 17" stroke="#2a292c" stroke-width="1.3"/></svg>
<span id="t67" class="a t" style="left:1035.3px;top:600.02px;font-size:19px;line-height:19px;color:#1d1c1f;font-family:'Liberation Sans',sans-serif;transform:scaleX(0.9811);transform-origin:0 0;">Anzeige<u>n</u>ame:</span>
<span id="t68" class="a t" style="left:1035.3px;top:640.02px;font-size:19px;line-height:19px;color:#1d1c1f;font-family:'Liberation Sans',sans-serif;transform:scaleX(0.9967);transform-origin:0 0;"><u>W</u>ert:</span>
<div class="a" style="left:1170.0px;top:596.0px;width:351.0px;height:35.0px;background:#f5f2f7;box-shadow:inset 0 0 0 1px #a6a4a8;"></div>
<div class="a" style="left:1170.0px;top:636.0px;width:351.0px;height:34.0px;background:#f5f2f7;box-shadow:inset 0 0 0 1px #a6a4a8;"></div>
<span id="t69" class="a t" style="left:1169.7px;top:602.32px;font-size:19px;line-height:19px;color:#1d1c1f;font-family:'Liberation Sans',sans-serif;transform:scaleX(0.9853);transform-origin:0 0;">stermann, Musterstr.1, 12345 Musterstadt</span>
<span id="t70" class="a t" style="left:1169.7px;top:642.22px;font-size:19px;line-height:19px;color:#1d1c1f;font-family:'Liberation Sans',sans-serif;transform:scaleX(0.9853);transform-origin:0 0;">stermann, Musterstr.1, 12345 Musterstadt</span>
<div class="a" style="left:1516.5px;top:600.0px;width:1.2px;height:26.0px;background:#111;"></div>
<div class="a" style="left:1244.0px;top:677.0px;width:129.0px;height:40.0px;background:#eef200;box-shadow:inset 0 0 0 1.5px #2f62ad;"></div>
<div class="a" style="left:1367.5px;top:679.0px;width:4.0px;height:37.0px;background:#e6ebf2;"></div>
<span id="t71" class="a t" style="left:1295.9px;top:687.32px;font-size:19px;line-height:19px;color:#1a1a10;font-family:'Liberation Sans',sans-serif;transform:scaleX(0.9179);transform-origin:0 0;">OK</span>
<div class="a" style="left:1390.0px;top:677.0px;width:130.0px;height:40.0px;background:#e1dee2;box-shadow:inset 0 0 0 1px #b0aeb2;"></div>
<span id="t72" class="a t" style="left:1408.6px;top:687.32px;font-size:19px;line-height:19px;color:#1d1c1f;font-family:'Liberation Sans',sans-serif;transform:scaleX(0.9978);transform-origin:0 0;">Abbrechen</span>
<svg class="a" style="left:0;top:0" width="2136" height="1215" viewBox="0 0 2136 1215">
<defs><filter id="sh" x="-10%" y="-10%" width="130%" height="140%"><feGaussianBlur in="SourceAlpha" stdDeviation="2"/><feOffset dx="1" dy="3"/><feComponentTransfer><feFuncA type="linear" slope="0.55"/></feComponentTransfer><feMerge><feMergeNode/><feMergeNode in="SourceGraphic"/></feMerge></filter></defs>
<g filter="url(#sh)" fill="#e10c0c">
<polygon points="1169.3,828.7 1486.2,855.4 1485.3,867.1 1520.5,853.3 1487.9,834.2 1487.0,845.8 1169.7,822.7"/><circle cx="1169.5" cy="825.7" r="3.0"/>
<polygon points="1515.7,817.5 1399.3,688.1 1408.8,679.4 1374.0,666.5 1383.7,702.3 1393.2,693.6 1511.3,821.5"/><circle cx="1513.5" cy="819.5" r="3.0"/>
</g></svg>
</body></html>
